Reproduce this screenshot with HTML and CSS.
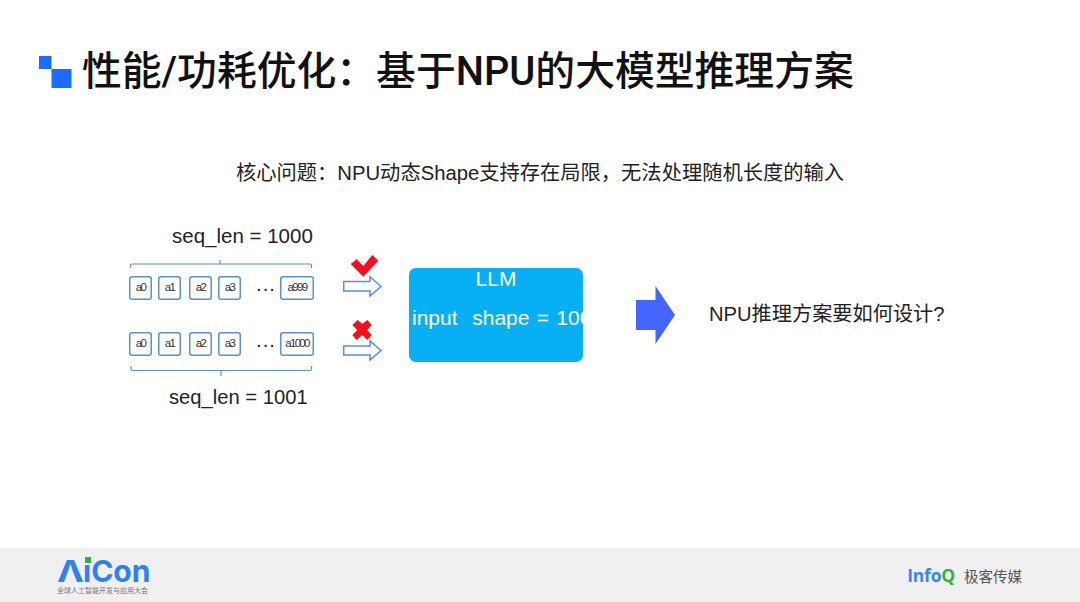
FILE: index.html
```html
<!DOCTYPE html>
<html lang="zh">
<head>
<meta charset="utf-8">
<title>性能/功耗优化</title>
<link rel="stylesheet" href="styles.css">
</head>
<body>
<div class="slide">
  <header class="head">
    <svg class="bullet" width="33" height="33" viewBox="0 0 33 33"><rect x="0" y="0" width="12.500" height="13" fill="#1a6cff"/><rect x="12.500" y="13" width="20" height="19" fill="#1a6cff"/></svg>
    <h1 class="title">性能/功耗优化&#xFF1A;基于NPU的大模型推理方案</h1>
  </header>
  <p class="problem">核心问题&#xFF1A;NPU动态Shape支持存在局限&#xFF0C;无法处理随机长度的输入</p>
  <section class="diagram">
    <div class="seq">
      <div class="len len-top">seq_len = 1000</div>
      <svg class="brace brace-top" width="184" height="11" viewBox="0 0 184 11"><path d="M1.500 8V5.500Q1.500 4 3 4H91V0M91 4H181Q182.500 4 182.500 5.500V8" fill="none" stroke="#5b8fd6" stroke-width="1.200"/></svg>
      <div class="tokens">
        <span class="tok">a0</span><span class="tok t2">a1</span><span class="tok t3">a2</span><span class="tok t4">a3</span><span class="dots">···</span><span class="tok last">a999</span>
      </div>
      <div class="tokens second">
        <span class="tok">a0</span><span class="tok t2">a1</span><span class="tok t3">a2</span><span class="tok t4">a3</span><span class="dots">···</span><span class="tok last">a1000</span>
      </div>
      <svg class="brace brace-bottom" width="184" height="12" viewBox="0 0 184 12"><path d="M2 1V4Q2 5.500 3.500 5.500H92V11M92 5.500H181Q182.500 5.500 182.500 4V1" fill="none" stroke="#5b8fd6" stroke-width="1.200"/></svg>
      <div class="len len-bottom">seq_len = 1001</div>
    </div>
    <div class="marks">
      <svg class="mark" width="44" height="21" viewBox="0 0 44 21"><path d="M10.700 9L16.700 4.300L23.300 11L32.300 0L38.300 5.700L23.300 21.700Z" fill="#fb0d1b"/></svg>
      <svg class="mark" width="44" height="21" viewBox="0 0 44 21"><path d="M3.700 5.500H30V0.800L41 10.500L30 20V15H3.700Z" fill="#fff" stroke="#5b8fd6" stroke-width="1.500"/></svg>
      <svg class="mark cross" width="44" height="21" viewBox="0 0 44 21"><path d="M12.300 5L17.700 0L22.300 4L27.300 0L31.700 5L27.300 10L31.700 15L27.300 20L22.300 15L16.700 20L12.300 15L17.300 10Z" fill="#fb0d1b"/></svg>
      <svg class="mark" width="44" height="21" viewBox="0 0 44 21"><path d="M3.700 6H30V1L41 10.500L30 20V15H3.700Z" fill="#fff" stroke="#5b8fd6" stroke-width="1.500"/></svg>
    </div>
    <div class="llm">
      <div class="llm-name">LLM</div>
      <div class="llm-shape">input&nbsp; shape = 1000</div>
    </div>
    <svg class="next" width="39" height="58" viewBox="0 0 39 58"><path d="M0 14H19.500V0L39 29L19.500 58V44H0Z" fill="#4465ff"/></svg>
    <p class="question">NPU推理方案要如何设计?</p>
  </section>
  <footer class="foot">
    <div class="aicon">
      <div class="aicon-word"><span class="aicon-a">Λ</span><span class="aicon-i">ı</span>Con</div>
      <div class="aicon-sub">全球人工智能开发与应用大会</div>
    </div>
    <div class="geek"><span class="infoq">Info<span class="q">Q</span></span><span class="geek-name">极客传媒</span></div>
  </footer>
</div>
</body>
</html>
```
FILE: styles.css
```css
* { box-sizing: border-box; }
html, body { margin: 0; padding: 0; background: #fff; }
body {
  font-family: "Liberation Sans", "Noto Sans CJK SC", sans-serif;
  color: #222;
}
.slide {
  width: 1080px;
  height: 602px;
  display: flex;
  flex-direction: column;
  overflow: hidden;
}
.head {
  display: flex;
  align-items: flex-start;
  padding: 46px 0 0 39px;
  height: 150px;
}
.bullet { margin-top: 10px; flex: none; }
.title {
  margin: 1px 0 0 10px;
  font-family: Roboto, "Noto Sans CJK SC", sans-serif;
  font-size: 39.800px;
  line-height: 50px;
  font-weight: 500;
  color: #111;
  white-space: nowrap;
}
.problem {
  margin: 8px 0 0 236px;
  height: 30px;
  font-size: 20.270px;
  line-height: 30px;
  white-space: nowrap;
  color: #222;
}
.diagram {
  margin-top: 34px;
  padding-left: 129px;
  display: flex;
  align-items: flex-start;
  height: 196px;
}
.seq { width: 184px; flex: none; }
.len {
  font-size: 20.500px;
  line-height: 28px;
  white-space: nowrap;
  color: #222;
}
.len-top { margin-left: 43px; }
.len-bottom { margin: 6px 0 0 40px; font-size: 20.200px; }
.brace { display: block; }
.brace-top { margin-top: 10px; }
.brace-bottom { margin-top: 9px; }
.tokens {
  display: flex;
  margin-top: 5px;
  height: 24px;
}
.tokens.second { margin-top: 32px; }
.tok {
  width: 23px;
  height: 24px;
  box-shadow: inset 0 0 0 1.500px #5b8fd6;
  border-radius: 3px;
  font-size: 11.500px;
  line-height: 23px;
  text-align: center;
  letter-spacing: -1.700px;
  color: #333;
  flex: none;
}
.t2 { margin-left: 6px; }
.t3 { margin-left: 8px; }
.t4 { margin-left: 6px; }
.dots {
  width: 39px;
  padding-left: 10px;
  text-align: center;
  font-size: 20px;
  line-height: 24px;
  color: #222;
  flex: none;
}
.last { width: 34px; }
.marks {
  margin: 33px 0 0 27px;
  width: 44px;
  flex: none;
}
.mark { display: block; overflow: visible; }
.cross { margin-top: 23px; }
.marks .mark:last-child { margin-top: -1px; }
.llm {
  margin: 46px 0 0 25px;
  width: 174px;
  height: 94px;
  border-radius: 7px;
  background: #07b0f4;
  color: #fff;
  overflow: hidden;
  flex: none;
}
.llm-name {
  text-align: center;
  font-size: 21px;
  line-height: 22px;
}
.llm-shape {
  margin: 17px 0 0 3px;
  font-size: 21px;
  line-height: 22px;
  word-spacing: 1.500px;
  white-space: nowrap;
}
.next { margin: 64px 0 0 53px; flex: none; }
.question {
  margin: 77px 0 0 34px;
  font-size: 20.200px;
  line-height: 30px;
  white-space: nowrap;
  color: #222;
}
.foot {
  margin-top: auto;
  height: 54px;
  background: #f0f0f0;
  display: flex;
  justify-content: space-between;
  align-items: flex-start;
  padding: 0 58px 0 57px;
}
.aicon { width: 92px; padding-top: 8px; }
.aicon-word {
  font-family: Inter, sans-serif;
  font-size: 30px;
  line-height: 30px;
  font-weight: 700;
  color: #2f80f0;
  white-space: nowrap;
}
.aicon-a {
  display: inline-block;
  width: 26px;
  transform: scaleX(1.2);
  transform-origin: left center;
}
.aicon-i { position: relative; }
.aicon-i::after {
  content: "";
  position: absolute;
  left: 2px;
  top: 4px;
  width: 6px;
  height: 6px;
  background: #2fb344;
}
.aicon-sub {
  font-family: "Noto Sans CJK SC", sans-serif;
  font-size: 7px;
  line-height: 9px;
  color: #777;
  white-space: nowrap;
}
.geek {
  display: flex;
  align-items: center;
  height: 20px;
  margin-top: 17px;
}
.infoq {
  font-family: "Open Sans", sans-serif;
  font-size: 17.500px;
  font-weight: 700;
  letter-spacing: -0.200px;
  color: #3a84ee;
}
.q { color: #2fb344; }
.geek-name {
  margin-left: 9px;
  font-family: "Noto Sans CJK SC", sans-serif;
  font-size: 14.500px;
  color: #555;
  white-space: nowrap;
}
```
